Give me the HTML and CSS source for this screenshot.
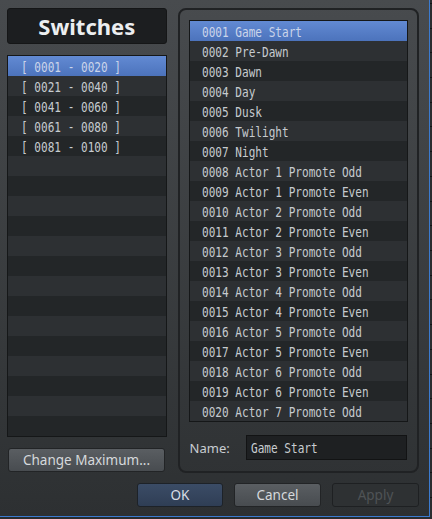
FILE: index.html
```html
<!DOCTYPE html>
<html>
<head>
<meta charset="utf-8">
<link rel="stylesheet" href="styles.css">
</head>
<body>
<div class="screen">
  <div class="window">
    <div class="main">
      <div class="left">
        <div class="title">Switches</div>
        <div class="list list-left">
          <div class="row sel"><span class="mono">[ 0001 - 0020 ]</span></div>
          <div class="row"><span class="mono">[ 0021 - 0040 ]</span></div>
          <div class="row"><span class="mono">[ 0041 - 0060 ]</span></div>
          <div class="row"><span class="mono">[ 0061 - 0080 ]</span></div>
          <div class="row"><span class="mono">[ 0081 - 0100 ]</span></div>
          <div class="row"></div><div class="row"></div><div class="row"></div><div class="row"></div><div class="row"></div>
          <div class="row"></div><div class="row"></div><div class="row"></div><div class="row"></div><div class="row"></div>
          <div class="row"></div><div class="row"></div><div class="row"></div><div class="row"></div>
        </div>
        <button class="btn change">Change Maximum...</button>
      </div>
      <div class="group">
        <div class="list list-right">
          <div class="row sel"><span class="mono">0001 Game Start</span></div>
          <div class="row"><span class="mono">0002 Pre-Dawn</span></div>
          <div class="row"><span class="mono">0003 Dawn</span></div>
          <div class="row"><span class="mono">0004 Day</span></div>
          <div class="row"><span class="mono">0005 Dusk</span></div>
          <div class="row"><span class="mono">0006 Twilight</span></div>
          <div class="row"><span class="mono">0007 Night</span></div>
          <div class="row"><span class="mono">0008 Actor 1 Promote Odd</span></div>
          <div class="row"><span class="mono">0009 Actor 1 Promote Even</span></div>
          <div class="row"><span class="mono">0010 Actor 2 Promote Odd</span></div>
          <div class="row"><span class="mono">0011 Actor 2 Promote Even</span></div>
          <div class="row"><span class="mono">0012 Actor 3 Promote Odd</span></div>
          <div class="row"><span class="mono">0013 Actor 3 Promote Even</span></div>
          <div class="row"><span class="mono">0014 Actor 4 Promote Odd</span></div>
          <div class="row"><span class="mono">0015 Actor 4 Promote Even</span></div>
          <div class="row"><span class="mono">0016 Actor 5 Promote Odd</span></div>
          <div class="row"><span class="mono">0017 Actor 5 Promote Even</span></div>
          <div class="row"><span class="mono">0018 Actor 6 Promote Odd</span></div>
          <div class="row"><span class="mono">0019 Actor 6 Promote Even</span></div>
          <div class="row"><span class="mono">0020 Actor 7 Promote Odd</span></div>
        </div>
        <div class="name-row">
          <span class="label">Name:</span>
          <div class="field"><span class="mono">Game Start</span></div>
        </div>
      </div>
    </div>
    <div class="actions">
      <button class="btn ok">OK</button>
      <button class="btn cancel">Cancel</button>
      <button class="btn apply">Apply</button>
    </div>
  </div>
  <div class="edge"></div>
</div>
</body>
</html>
```

FILE: styles.css
```css
html, body {
  margin: 0;
  padding: 0;
}
body {
  width: 432px;
  height: 519px;
  overflow: hidden;
  background: #2a2c2e;
  font-family: "Noto Sans", "DejaVu Sans", sans-serif;
}
.screen {
  display: flex;
  height: 519px;
}
.window {
  box-sizing: border-box;
  width: 430px;
  height: 517px;
  border-right: 1px solid #3b7bd0;
  border-bottom: 1px solid #3b7bd0;
  background: linear-gradient(#484b4e, #2d3032);
  padding: 8px 10px 0 7px;
  display: flex;
  flex-direction: column;
}
.edge {
  width: 2px;
  height: 517px;
  background: repeating-linear-gradient(#2b2d30 0, #2b2d30 3px, #121416 3px, #121416 4px, #2b2d30 4px, #2b2d30 24.7px);
}
.main {
  display: flex;
  gap: 11px;
  height: 465px;
}
.left {
  width: 160px;
  display: flex;
  flex-direction: column;
}
.title {
  box-sizing: border-box;
  height: 36px;
  background: #1c1e20;
  border: 1px solid #151617;
  border-radius: 3px;
  display: flex;
  align-items: center;
  justify-content: center;
  font-weight: bold;
  font-size: 22px;
  color: #eceef0;
  padding-bottom: 1px;
}
.list {
  box-sizing: border-box;
  border: 1px solid #151718;
  background: #232628;
  overflow: hidden;
}
.list-left {
  margin-top: 11px;
  height: 382px;
}
.list-left .row {
  padding-left: 13px;
}
.list-right {
  height: 402px;
}
.list-right .row {
  padding-left: 12px;
}
.row {
  box-sizing: border-box;
  height: 20px;
  padding-top: 1px;
  line-height: 18px;
  color: #c6cbcf;
  background: #232628;
}
.row:nth-child(even) {
  background: #2d3033;
}
.row.sel {
  background: linear-gradient(#628ad3, #4c73bc);
  color: #cbd5ea;
}
.mono {
  display: inline-block;
  font-family: "DejaVu Sans Mono", monospace;
  font-size: 13.5px;
  white-space: pre;
  transform: scaleX(0.82);
  transform-origin: 0 50%;
}
.btn {
  box-sizing: border-box;
  height: 24px;
  margin: 0;
  padding: 0;
  font-family: "Noto Sans", "DejaVu Sans", sans-serif;
  font-size: 13.5px;
  border-radius: 3px;
  border: 1px solid #222426;
  color: #d6d9dc;
  background: linear-gradient(#5a5e62, #484c50);
}
.change {
  margin-top: 11px;
  margin-left: 1px;
  width: 157px;
}
.group {
  box-sizing: border-box;
  width: 242px;
  height: 465px;
  border: 2px solid #202224;
  border-radius: 8px;
  padding: 10px 9px 0 9px;
}
.name-row {
  display: flex;
  align-items: center;
  margin-top: 13px;
  height: 25px;
}
.label {
  width: 56px;
  padding-left: 1px;
  font-size: 13px;
  color: #c9cdd1;
}
.field {
  box-sizing: border-box;
  width: 161px;
  height: 25px;
  background: #1e2022;
  border: 1px solid #121314;
  padding-left: 4px;
  padding-top: 1px;
  line-height: 20px;
  color: #c9cdd1;
}
.actions {
  display: flex;
  justify-content: flex-end;
  gap: 11px;
  margin-top: 10px;
}
.ok {
  width: 86px;
  background: linear-gradient(#3b4c66, #2f3e55);
  border-color: #1d2228;
  color: #d8dde5;
}
.cancel {
  width: 87px;
}
.apply {
  width: 87px;
  background: #2e3133;
  border-color: #1e2022;
  color: #4f5356;
}
```
